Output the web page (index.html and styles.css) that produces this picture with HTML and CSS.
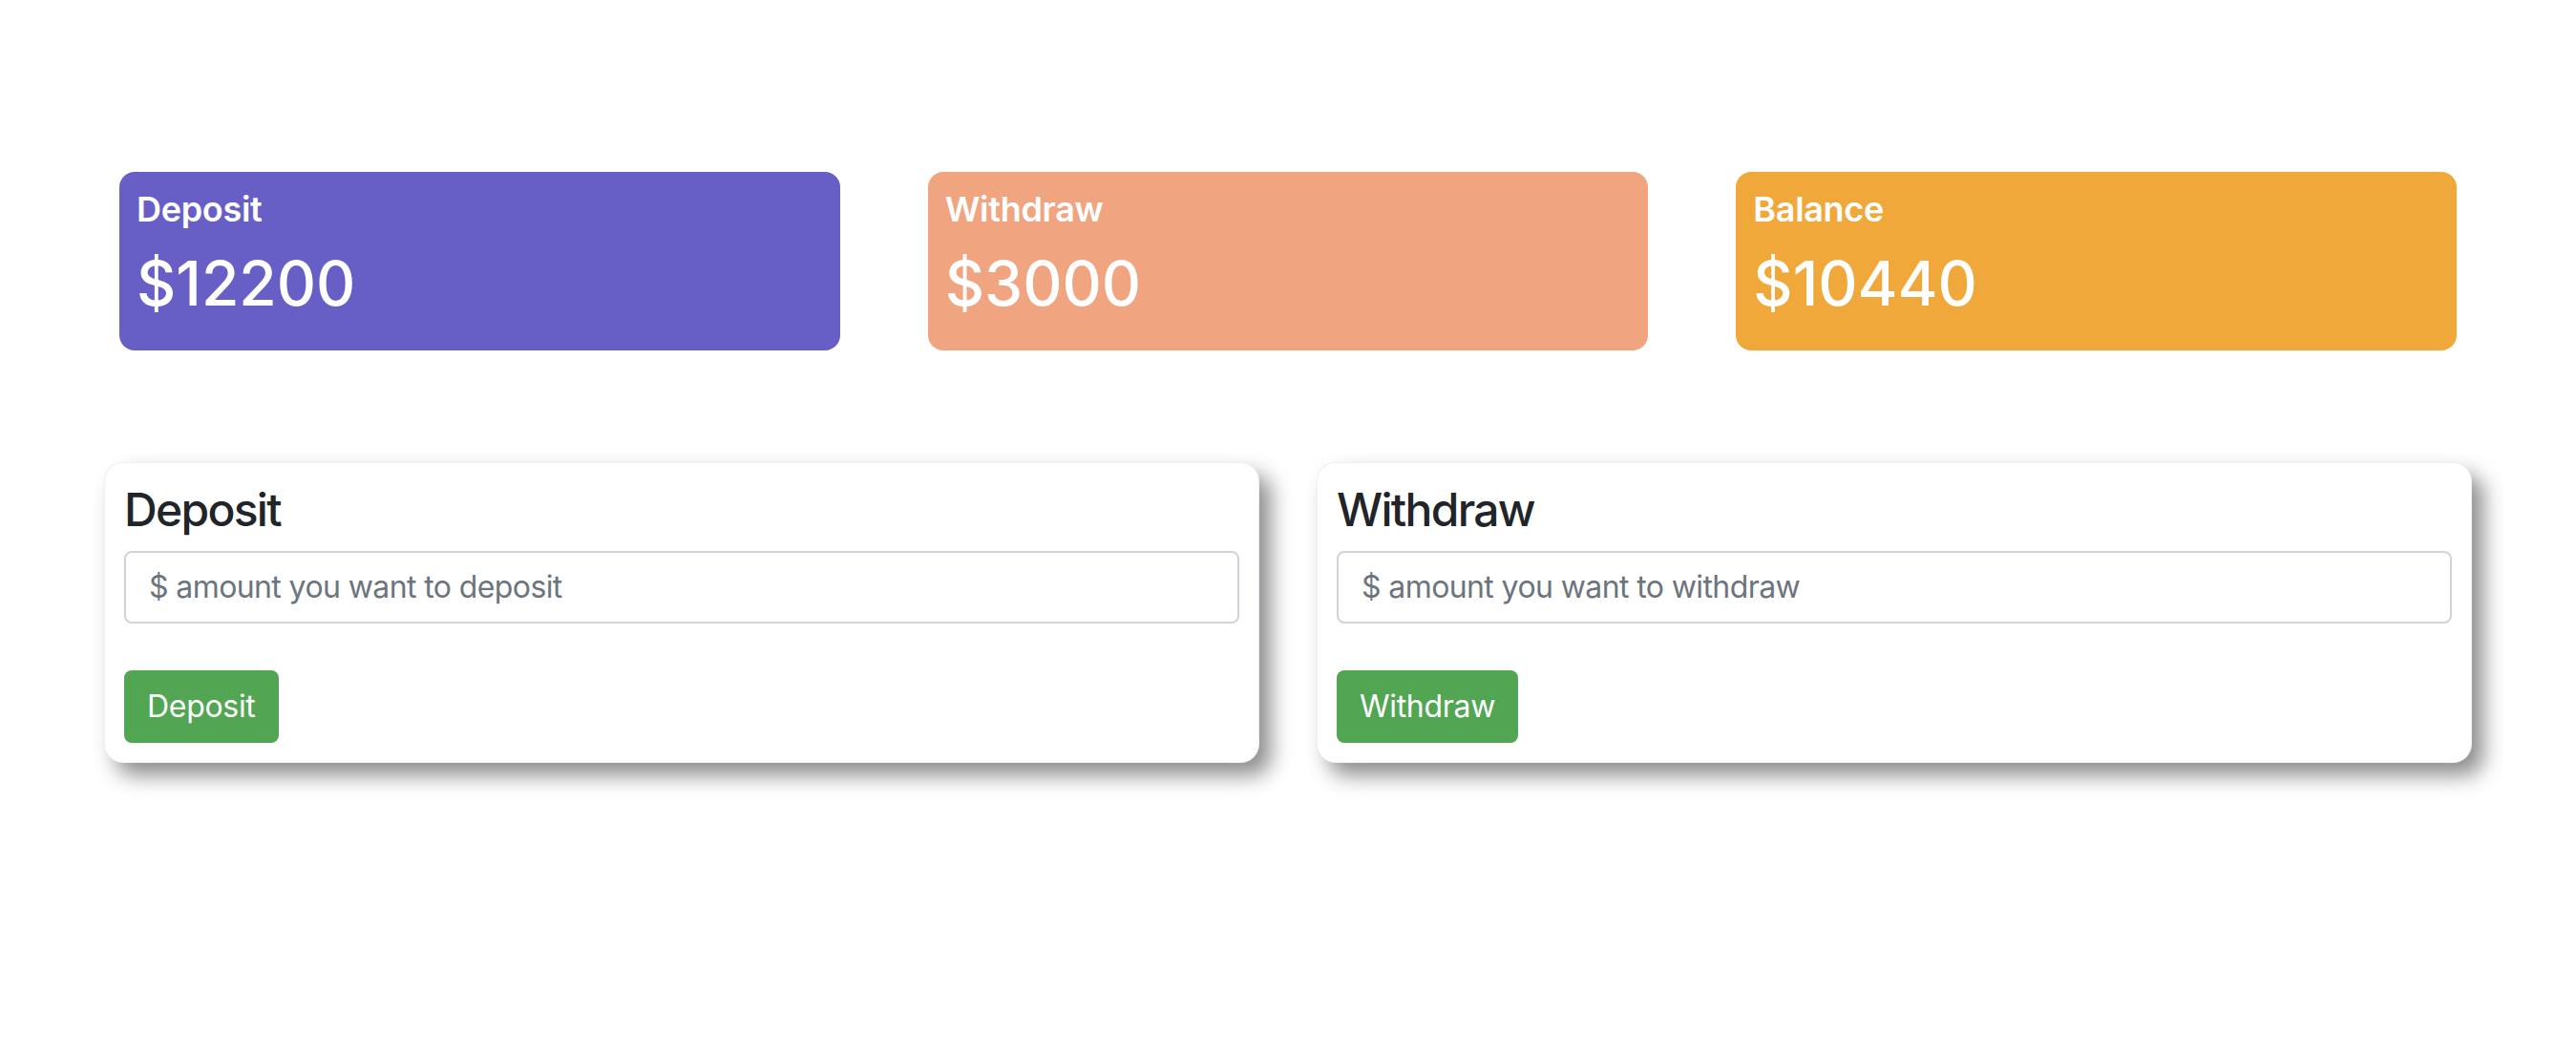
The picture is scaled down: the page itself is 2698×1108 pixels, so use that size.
FILE: index.html
```html
<!DOCTYPE html>
<html lang="en">
<head>
<meta charset="utf-8">
<title>Bank</title>
<link rel="stylesheet" href="styles.css">
</head>
<body>
<main class="page">
  <section class="stats">
    <div class="stat stat-deposit">
      <h5 class="stat-label">Deposit</h5>
      <h2 class="stat-value">$12200</h2>
    </div>
    <div class="stat stat-withdraw">
      <h5 class="stat-label">Withdraw</h5>
      <h2 class="stat-value">$3000</h2>
    </div>
    <div class="stat stat-balance">
      <h5 class="stat-label">Balance</h5>
      <h2 class="stat-value">$10440</h2>
    </div>
  </section>
  <section class="forms">
    <form class="panel">
      <h4 class="panel-title">Deposit</h4>
      <input class="field" type="number" placeholder="$ amount you want to deposit">
      <button class="btn" type="button">Deposit</button>
    </form>
    <form class="panel">
      <h4 class="panel-title">Withdraw</h4>
      <input class="field" type="number" placeholder="$ amount you want to withdraw">
      <button class="btn" type="button">Withdraw</button>
    </form>
  </section>
</main>
</body>
</html>
```
FILE: styles.css
```css
* { box-sizing: border-box; }
html, body { margin: 0; padding: 0; background: #fff; }
body {
  font-family: Inter, "Noto Sans", "Liberation Sans", sans-serif;
  color: #212529;
  min-height: 1108px;
}
.page { padding: 180px 0 240px; }

.stats {
  display: grid;
  grid-template-columns: repeat(3, 1fr);
  gap: 92px;
  margin: 0 125px;
}
.stat {
  height: 187px;
  border-radius: 16px;
  padding: 18px 18px;
  color: #fff;
}
.stat-deposit { background: #675ec6; }
.stat-withdraw { background: #f1a480; }
.stat-balance { background: #f1a83b; }
.stat-label {
  margin: 0 0 18px;
  font-size: 36px;
  font-weight: 600;
  line-height: 1.2;
  letter-spacing: -0.3px;
}
.stat-value {
  margin: 0;
  font-size: 64px;
  font-weight: 500;
  line-height: 1.2;
}

.forms {
  display: grid;
  grid-template-columns: 1fr 1fr;
  gap: 60px;
  margin: 117px 109px 0;
}
.panel {
  margin: 0;
  background: #fff;
  border: 1px solid rgba(0,0,0,0.06);
  border-radius: 20px;
  padding: 20px;
  display: flex;
  flex-direction: column;
  align-items: flex-start;
  box-shadow: 12px 13px 22px rgba(0,0,0,0.45);
}
.panel-title {
  margin: 0 0 14px;
  font-size: 48px;
  font-weight: 550;
  line-height: 1.2;
  letter-spacing: -1.7px;
  color: #212529;
}
.field {
  width: 100%;
  height: 76px;
  border: 2px solid #ced4da;
  border-radius: 8px;
  padding: 0 24px;
  font-family: inherit;
  font-size: 32px;
  letter-spacing: -0.6px;
  color: #495057;
  background: #fff;
  outline: none;
  -moz-appearance: textfield;
}
.field::-webkit-outer-spin-button,
.field::-webkit-inner-spin-button { -webkit-appearance: none; margin: 0; }
.field::placeholder { color: #6c757d; opacity: 1; }
.btn {
  margin-top: 49px;
  height: 76px;
  padding: 0 24px;
  border: none;
  border-radius: 8px;
  background: #52a552;
  color: #fff;
  font-family: inherit;
  font-size: 32px;
  font-weight: 400;
  letter-spacing: -0.3px;
  cursor: pointer;
}
```
